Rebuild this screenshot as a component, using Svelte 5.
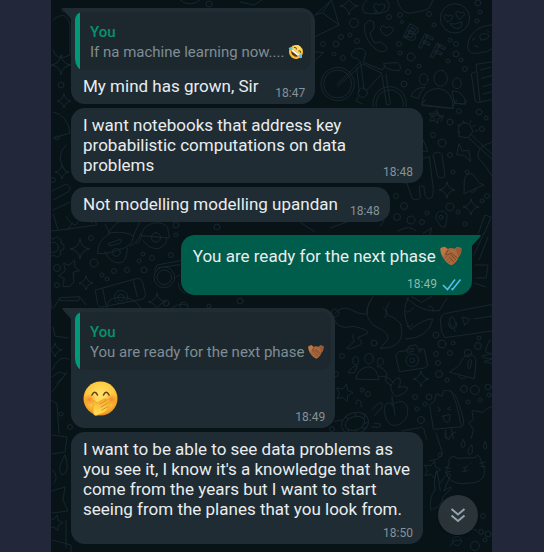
<script>
  const messages = [
    { id: 1, tail: true, quote: { text: 'If na machine learning now....', emoji: 'laugh' }, text: 'My mind has grown, Sir', time: '18:47' },
    { id: 2, text: 'I want notebooks that address key probabilistic computations on data problems', time: '18:48' },
    { id: 3, text: 'Not modelling modelling upandan', time: '18:48' },
    { id: 4, mine: true, tail: true, group: true, below: true, text: 'You are ready for the next phase', emoji: 'shake', time: '18:49' },
    { id: 5, tail: true, group: true, quote: { text: 'You are ready for the next phase', emoji: 'shake' }, big: 'giggle', time: '18:49' },
    { id: 6, below: true, text: "I want to be able to see data problems as you see it, I know it's a knowledge that have come from the years but I want to start seeing from the planes that you look from.", time: '18:50' }
  ];

  const circles = [
    [389,17,2.5],[400,15,2.5],[402,22,1.5],[354,23,4.5],[341,37,2.5],[350,35,2],[357,41,2.5],[336,44,3],[323,44,2.5],[334,54,2],[343,58,2.5],
    [399,44,2.5],[400,53,2],[411,57,4],[408,72,2.5],[419,66,2],[429,14,2.5],[434,25,2],[478,3,3],[480,12,2],[477,21,2],[450,40,2],[456,44,2.5],
    [456,54,3],[448,61,2],[461,60,2],[465,69,2.5],[404,84,3],[459,111,2.5],[479,112,3],[450,122,3],[486,118,2],[433,135,2.5],[442,143,4],[450,155,2.5],
    [482,129,2.5],[453,172,2],[487,196,2.5],[482,201,2],[450,207,4],[458,212,2],[427,213,2],[404,206,3.5],[411,220,4],[397,217,3.5],[422,222,2.5],[465,224,2],
    [396,196,2.5],[57,268,3.5],[57,285,2.5],[94,263,4],[102,275,2],[114,271,2.5],[127,270,2.5],[107,279,2],[144,270,3],[143,254,2],[139,261,2],[152,258,2.5],
    [171,255,2.5],[176,225,3],[176,235,2],[91,238,2.5],[374,343,3],[342,356,2.5],[362,390,2],[368,394,2.5],[436,335,3],[442,344,4],[453,343,2],[436,354,2.5],
    [450,353,2.5],[438,363,2.5],[439,374,3.5],[447,380,2],[478,346,3.5],[479,338,2],[415,397,2.5],[429,397,3],[417,409,2],[425,404,2],[421,420,3.5],
    [464,389,3.5],[475,390,4.5],[488,387,3],[480,400,2],[468,402,2],[489,395,2],[440,455,2],[483,516,2.5],[488,534,3],[481,532,2.5],[485,540,2],
    [457,541,4.5],[475,546,4.5],[61,85,3],[57,138,2],[53,180,2.5],[61,414,2],[70,427,2.5],[335,313,4],[336,374,2.5],[332,429,2.5],[64,10,2],[209,4,3],[217,227,3],[240,301,3],[209,306,2],[166,303,3],[376,12,1.5],[184,306,4]
  ];
  const sparkles = [[349,6,9],[447,190,8],[471,207,8],[80,249,10],[86,283,7],[157,302,9],[421,379,8],[61,65,10],[64,101,7],[62,172,7],[55,350,7]];
  const stars = [[435,117,7],[344,393,9],[55,523,8],[432,470,9]];

  const sparkle = ([x, y, r]) => `M${x} ${y - r}Q${x + 1} ${y - 1} ${x + r} ${y}Q${x + 1} ${y + 1} ${x} ${y + r}Q${x - 1} ${y + 1} ${x - r} ${y}Q${x - 1} ${y - 1} ${x} ${y - r}Z`;
  const star = ([x, y, r]) => {
    let d = '';
    for (let i = 0; i < 10; i++) {
      const a = (i * Math.PI) / 5 - 1.3;
      const q = i % 2 ? r * 0.5 : r;
      d += `${i ? 'L' : 'M'}${x + q * Math.cos(a)} ${y + q * Math.sin(a)}`;
    }
    return d + 'Z';
  };
</script>

{#snippet laugh()}
  <svg class="emoji" viewBox="0 0 32 32" role="img" aria-label="Rolling on the floor laughing">
    <g transform="rotate(38 16 16)">
      <circle cx="16" cy="16" r="14" fill="#fbbf2d" />
      <circle cx="15" cy="12" r="10" fill="#fdd75a" />
      <path d="M7 16h18c0 6-3 9-9 9s-9-3-9-9Z" fill="#5f3515" />
      <path d="M7 16h18l-1 4H8Z" fill="#fff" />
      <path d="M8 11q3-3 5 0M24 11q-3-3-5 0" fill="none" stroke="#6b3d12" stroke-width="2" stroke-linecap="round" />
      <path d="M6 13q-7 2-6 6 3 4 6-1Z" fill="#4fc5ee" />
      <path d="M26 13q7 2 6 6-3 4-6-1Z" fill="#4fc5ee" />
    </g>
  </svg>
{/snippet}

{#snippet shake()}
  <svg class="emoji" viewBox="0 0 32 27" role="img" aria-label="Handshake">
    <path d="M1 2 7 0l4 3 5-1 5 1 4-3 6 2c1 5-1 10-4 13-1 5-6 10-10 12-4-1-9-5-12-10C2 13 0 8 1 2Z" fill="#a9693d" />
    <path d="M1 2 7 0l3 3-5 11C2 10 0 6 1 2Z" fill="#bb7748" />
    <path d="m31 2-6-2-3 3 5 11c3-3 4-8 4-12Z" fill="#9a5a33" />
    <path d="m12 5-4 6q3 3 8-2l9 7M16 12l7 7M14 15l6 7" fill="none" stroke="#6d3d20" stroke-width="1.200" stroke-linecap="round" stroke-linejoin="round" />
    <path d="m7 17 3-3M10 20l3-3M13 23l3-3" fill="none" stroke="#84502e" stroke-width="1.200" stroke-linecap="round" />
  </svg>
{/snippet}

{#snippet giggle()}
  <svg class="emoji" viewBox="0 0 35 35" role="img" aria-label="Face with hand over mouth">
    <defs>
      <radialGradient id="face" cx=".5" cy=".38" r=".62">
        <stop offset="0" stop-color="#ffe36a" />
        <stop offset=".65" stop-color="#fdc93c" />
        <stop offset="1" stop-color="#ee8b1c" />
      </radialGradient>
      <radialGradient id="cheek">
        <stop offset="0" stop-color="#f47a2a" stop-opacity=".85" />
        <stop offset="1" stop-color="#f47a2a" stop-opacity="0" />
      </radialGradient>
      <linearGradient id="hand" x2="0" y2="1">
        <stop offset="0" stop-color="#f5ad2e" />
        <stop offset="1" stop-color="#ffe25c" />
      </linearGradient>
    </defs>
    <circle cx="17.5" cy="17.5" r="17" fill="url(#face)" />
    <circle cx="6.5" cy="18.5" r="6" fill="url(#cheek)" />
    <circle cx="28.5" cy="18.5" r="6" fill="url(#cheek)" />
    <path d="M9 14q2.700-5.500 5.500 0M20.500 14q2.700-5.500 5.500 0" fill="none" stroke="#653a18" stroke-width="1.600" stroke-linecap="round" />
    <path d="M10 23q-1-5 2-3l2 2 7-4q3-1 2 1l3-.5q2 1 0 2.500 2 1 0 3 1 2-1 3-1 4-6 5.500l-6 2q-3 0-3-5Z" fill="url(#hand)" stroke="#e89b25" stroke-width=".7" />
    <path d="m17 23 6-3.500M18 26l7-4M19 29l6-3.500" fill="none" stroke="#d9861d" stroke-width=".9" stroke-linecap="round" />
  </svg>
{/snippet}

{#snippet emoji(name)}
  {#if name === 'laugh'}{@render laugh()}{:else if name === 'shake'}{@render shake()}{:else}{@render giggle()}{/if}
{/snippet}

<div class="page">
  <main class="chat">
    <svg class="doodles" viewBox="51 0 441 552" preserveAspectRatio="xMinYMin slice" aria-hidden="true">
      {#each circles as [x, y, r]}<circle cx={x} cy={y} {r} />{/each}
      {#each sparkles as s}<path d={sparkle(s)} />{/each}
      {#each stars as s}<path d={star(s)} />{/each}
      <g class="fine" transform="translate(310 0) scale(.33333)">
        <path d="M15 45 65 0l22 75L15 110M15 45l22-7 28-38M37 38l50 37" />
        <path d="M170 0q-20 20-8 38 35 10 70-5 12-18-2-33M207 40q-24-18-12-28 8-3 12 4 8-9 16-2 8 12-16 26ZM262 0q8 35 35 40 40-5 60-15l12-25" />
        <circle cx="435" cy="55" r="44" />
        <path d="M413 66q-19-15-7-22 7-1 9 5 7-7 13 0 3 8-15 17ZM448 57q-17-14-7-23 7-2 10 5 8-6 12 1 2 9-15 17ZM421 72q15 3 35-7 2 22-16 20-13-1-19-13Z" />
        <path d="M190 65q-15-10-26 10c-3 32 15 65 45 79q15 5 22-8 0-10-20-20-10 0-16 3-14-16-15-30l10-10q5-10 0-24ZM229 108q-28-19-13-30 8-2 12 6 9-8 20-1 9 13-19 25Z" />
        <path d="M473 142q0-45 47-63l30-5M473 142q2 20 20 17 12 5 18-2 15 3 35-10M513 120q-10-15 5-19 15-2 19 6-2 12-24 13ZM487 120l8-5m0 22 9 4m25-51 8 7" />
        <circle cx="83" cy="252" r="50" /><circle cx="83" cy="252" r="42" />
        <path d="M190 320a50 50 0 1 1 98 0M199 320a41 41 0 1 1 80 0M82 252l70-66-12-12q-12 3-15-7c-3-24 35-30 43-10l-8 30 57 23 9-14M84 258l75-66 57 28-45 50-9-2-10-78M140 205l8 70M216 225l14 90 11-2-13-90M222 190l40-2q15 12 6 24-20 2-43-9Z" />
        <circle cx="158" cy="278" r="14" /><path d="m150 284-13 18 20 10" />
        <ellipse cx="392" cy="235" rx="20" ry="24" /><ellipse cx="341" cy="238" rx="13" ry="17" /><ellipse cx="441" cy="250" rx="13" ry="16" />
        <path d="M335 315q3-48 49-50 46 5 46 60ZM303 288q10-27 43-26-15 10-20 32ZM427 273q35-2 40 39l-32-2Z" />
        <path d="M550 185l-52 8 12 113 40-8M498 215l-14 6 12 84 14 3M512 210l30-8M515 235l30-8M518 260l30-8M520 282l30-8" />
        <g class="letters"><text transform="translate(277 109) rotate(27)">B</text><text transform="translate(322 139) rotate(27)">F</text><text transform="translate(358 167) rotate(27)">F</text></g>
        <path d="m15 155 25 3-23 22M375 360l-10-14 12 2 5-12 6 13 13-2-8 16" />
      </g>
      <g class="fine" transform="translate(380 100) scale(.33333)">
        <path d="m135 0-10 14 94 11 5-25M232 0l-7 10 28 3 6-13" />
        <path d="M237 96q-8-23 14-28 22-2 27 28l-15 17-25-3ZM273 104l67 62M265 113l75 68M340 125q-55 15-45 50 22 18 45 62" />
        <path d="M240 95l-8 3m10-20-9-3m20-4-3-9m20 8 3-8m5 18 8-5m-1 18 9-1" />
        <path d="M237 132l-7 32 23 2 19 20-6-36-18 3ZM252 280l1-40q4-22 25-18l16 20q0 8 17 12Z" /><circle cx="261" cy="216" r="6" /><path d="M272 276q13 4 17-10" />
        <path d="m183 379-14-20c-8-32 35-34 32-7l-5 28Z" /><circle cx="183" cy="352" r="6" />
        <path d="m130 120 13 34h-13M163 160q13-9 23 4l9 64q-7 10-22 2l-13-62Z" />
        <path d="m130 175 18-5 12 98q0 30-15 28-12-2-13-37-12-3-14 1l3 33q-12 11-25 2l-15-45-17-3" />
        <path d="m295 400 20-55 18 6-20 50M130 400l25-17-5 20M0 378l12-15-5-10" />
      </g>
      <g class="fine" transform="translate(330 290) scale(.33333)">
        <path d="M15 70q20-24 45-12 25 15 50 15 0-30 20-55M15 92q10 28 55 17 50 10 42 22l-30 12q18 10 10 20-35 20-42 11l23-20q-10-20 0-23M125 25c-30 50-7 80 33 95q20 15 15 28l-22 27c50 0 75-25 60-75l-20-17q-37-7-14-45" />
        <path d="M235 22q-25 45 5 97 45-35 69-32-15 60-83 60M230 25c35 30 60 40 98 37l23-38M245 20l30 17 30-17M160 55q17 9 5 28m85-30q-15 20-22 12m20 38q-5 12-18 6m80-45q-1-18-14-15" />
        <path d="m331 88 3 35 10 20 141-20M331 88q2-12 12-17l145-28M359 90q0-9 7-9 8 0 10 22-3 12-12 8ZM354 98q4 20 17 18 12-4 9-19m-7 20 2 8M397 82l7 24 15-17ZM432 87l53-9" />
        <path d="m198 195 9-10 22-3 8-13 20-5 8 13 18 1 10 49-9 7-75 11Z" /><circle cx="247" cy="211" r="19" /><circle cx="247" cy="211" r="7" /><path d="M232 178l18-3v9l-17 3Z" /><circle cx="270" cy="182" r="4" />
        <path d="m359 246 30-21c8-35 48-45 49-7l-5 47ZM385 258q9 14 21 6M415 212q5-8 10 0l-4 22q-5 4-7 0Z" /><circle cx="414" cy="189" r="11" />
        <ellipse cx="117" cy="206" rx="13" ry="16" /><ellipse cx="77" cy="212" rx="9" ry="12" /><ellipse cx="151" cy="215" rx="9" ry="11" />
        <path d="M78 266q4-32 38-36 27 5 30 38ZM55 248q8-20 27-20l-8 19ZM140 228q28 7 32 31h-24" />
        <path d="M185 285q-21-5-18-22 17 2 22 17 2-13 19-17 8 15-4 30 12-6 28-1 1 18-32 27-14-2-19-34ZM186 318l9 57M186 320v25M187 345q-20-21-24 15c6 75 68 45 70 6 1-36-28-39-46-20" />
        <ellipse cx="75" cy="400" rx="41" ry="32" transform="rotate(-18 75 400)" /><ellipse cx="75" cy="400" rx="30" ry="20" transform="rotate(-18 75 400)" />
        <path d="M78 342q2-20 14-8l2 17M125 360q35-40 32-10l-24 27M134 400q30 0 12 12l-21-1M35 390l-22 4m35-16 6 10m20-20 5 12m26-9-2 14m11 12-15 5m10 13-14-2m-10 19-9-11m-20 13-2-14" />
        <path d="m310 417-11-72 15-12 5-22 17 8 5-17c35-7 42 30 52 60l8 31q0 21-13 18ZM362 303q15 16 31 102M323 352l9 8-8 4m37-13-9 6 10 3M335 379l25-6q1 23-9 24-12-2-10-20M346 420l4 27M364 417l6 29" />
        <path d="M485 350q-17 4-26 17l-33-6 4 28-14 10 15 20-8 27M480 150q-15 25-12 37l20 4-31 6q0 8 31 10l-27 8 25 5" />
        <path d="m215 440 4-18 56-10q8 0 10 18l5 17" />
      </g>
      <g class="fine" transform="translate(50 210) scale(.33333)">
        <path d="m10 13 14 48 116-16-12-35M48 20q17 25 28 25l28-33M52 60 68 38m60-1-29-8M24 61 0 63" />
        <path d="M143 130q-2-40 40-62 50-5 68 12-5 30-46 40-40 15-62 10ZM175 70q20-35 40-35h55l-20 43M177 100l35-12q5 9-3 12l-29 8ZM240 108q25-12 33-38M275 77c0-40 60-50 78-25l5 32-83-7ZM257 100q15 1 17-23M165 125q15 34 42 34 25-2 25-45M280 92q15 25 45 24 25-9 25-30" />
        <circle cx="199" cy="127" r="12" /><circle cx="318" cy="82" r="14" />
        <path d="m0 80 10 8 10-8 14 10-2 10 10 4v13l-12 5 3 12-11 8-12-7-10 6" /><circle cx="10" cy="112" r="15" />
        <path d="m42 160 15 6 16-15 2 20 14 11-20 5 3 29-13 13-20 1 4-24-18-8 20-15Z" />
        <path d="m137 240 125-35q12 1 16 12l9 37q-4 13-12 14l-120 23q-14-2-13-12ZM158 236l10 49M250 212l12 48" /><circle cx="213" cy="261" r="20" /><circle cx="213" cy="263" r="10" />
        <path d="M170 295q0-35 43-33 42 0 60 33" />
        <circle cx="343" cy="202" r="31" /><circle cx="343" cy="202" r="22" /><path d="m314 183 7-18 70-13M325 173l65-9M375 205q10-13 15-8M385 220q0 20 20 30M365 295q20-18 45-10" />
        <path d="m10 295 20-32 60-3 17 24M30 263v9h55l5-10M0 250l5 45" />
      </g>
      <g class="fine" transform="translate(430 433) scale(.33333)">
        <path d="M45 0v12l12 8 6-15 14-8M100 20q-12 16-3 24 15-3 3-24M125 35q-18 20-7 30 15-3 7-30M165 26q10 18 2 22-12-3-2-22" />
        <path d="M70 70q-19 6-12 18l-10 28q5 32 45 36l40-3q35-7 30-40l-12-33q-5-16-16-2l-50 2ZM84 98h1m38-6h1M99 104l8 1 5-7m-8 9v7m-8 1q8 3 18-3M45 103l16 3m-15 12 16-3M165 87l-16 5m17 9-16-1" />
        <path d="M18 0 37 60q0 9-15 18L0 83M15 170q-5-38 6-58l10 60M31 150q23-40 31-24l-20 47M15 170q-20 25-12 63M42 173q25-17 22-7l-25 25q-3 30-30 38M65 290l35-10 40 12M60 340q10-22 30-18" />
      </g>
      <g>
        <path d="M53 20q13-11 17 4v31q-14 7-17-5M53 112q15 3 17 21l-17 5M66 145q-12 11 0 27M52 191l14-7q7 3 2 8l-15 8M53 210l17-8M53 327l2 9 13 2M52 370q7-16 17-11M52 377l7-5 7 2-9 9M67 372l-15 20M52 435l15 2-2 15-13 2M65 455q-9 14-3 20 9-2 3-20M53 470q6 8 1 13M51 491l14-4-2 13 5 11-16 2M66 520v28M52 540l19 5v7M51 400l6 4 2 29" />
        <path d="M180 0q10 8 20 0M240 2l14 3 8-5M105 224l5 10M300 222l15 10M330 228l20-7M398 231q12-7 18 0M484 233l-10 22M488 237l-9 23M475 265h13l-2 13h-10M474 283l12 4" />
      </g>
    </svg>

    <ol class="thread" aria-label="Messages">
      {#each messages as m (m.id)}
        <li class="bubble" class:mine={m.mine} class:tail={m.tail} class:group={m.group}>
          {#if m.tail}
            <svg class="corner" viewBox="0 0 12 14" aria-hidden="true"><path d="M12 0H1.500Q-.5 0 .6 1.500L10 12l2 2Z" /></svg>
          {/if}
          {#if m.quote}
            <blockquote class="quote">
              <strong>You</strong>
              <p>{m.quote.text} {@render emoji(m.quote.emoji)}</p>
            </blockquote>
          {/if}
          <div class="body" class:below={m.below}>
            {#if m.big}
              <p class="big">{@render emoji(m.big)}</p>
            {:else}
              <p class="text" class:roomy={m.emoji}>{m.text}{#if m.emoji}{' '}{@render emoji(m.emoji)}{/if}</p>
            {/if}
            <span class="meta">
              <time>{m.time}</time>
              {#if m.mine}
                <svg class="ticks" viewBox="0 0 20 13" role="img" aria-label="Read"><path d="m1 7 4.500 4.500L13 1.500M9.500 10.500l1 1L18.500 1.500" /></svg>
              {/if}
            </span>
          </div>
        </li>
      {/each}
    </ol>

    <button class="jump" type="button" aria-label="Scroll to latest message">
      <svg viewBox="0 0 16 16" aria-hidden="true"><path d="m1.500 2 6.500 5.500L14.500 2M1.500 8.500 8 14l6.500-5.500" /></svg>
    </button>
  </main>
</div>

<style>
  :global(body) {
    background: #222839;
  }

  .page {
    min-height: 100vh;
    padding: 0 52px 0 51px;
    display: grid;
    font-family: Roboto, sans-serif;
    box-sizing: border-box;
  }

  .chat {
    position: relative;
    overflow: hidden;
    padding: 8px 20px 7px;
    background: #081318;
    color: #e9edef;
  }

  .doodles {
    position: absolute;
    inset: 0;
    width: 100%;
    height: 100%;
    fill: none;
    stroke: #17262e;
    stroke-width: 1;
    stroke-linecap: round;
    stroke-linejoin: round;
  }

  .fine {
    stroke-width: 3;
  }

  .letters {
    font: 700 62px Roboto, sans-serif;
  }

  .thread {
    position: relative;
    display: flex;
    flex-direction: column;
    align-items: flex-start;
    gap: 4px;
    margin: 0;
    padding: 0;
    list-style: none;
  }

  .bubble {
    position: relative;
    box-sizing: border-box;
    max-width: 352px;
    border-radius: 14px;
    background: #202c33;
    color: #202c33;
  }

  .bubble.group {
    margin-top: 9px;
  }

  .bubble.mine {
    align-self: flex-end;
    background: #005c4b;
    color: #005c4b;
  }

  .corner {
    position: absolute;
    top: 0;
    left: -9px;
    width: 12px;
    height: 14px;
    fill: currentColor;
  }

  .mine .corner {
    left: auto;
    right: -9px;
    transform: scaleX(-1);
  }

  .tail:not(.mine) {
    border-top-left-radius: 0;
  }

  .tail.mine {
    border-top-right-radius: 0;
  }

  p {
    margin: 0;
  }

  .quote {
    position: relative;
    margin: 0;
    border: 4px solid transparent;
    border-bottom: 0;
    padding: 10px 7px 8px 15px;
    border-radius: 12px;
    background: linear-gradient(90deg, #009a78 5px, #1d282e 5px) padding-box;
    color: #7f8d95;
    font-size: 15px;
    line-height: 20px;
  }

  .quote strong {
    display: block;
    color: #05926f;
    font-weight: 500;
  }

  .quote p {
    height: 20px;
  }

  .quote .emoji {
    width: 16px;
    height: 16px;
    vertical-align: -3px;
  }

  .body {
    display: flex;
    justify-content: space-between;
    align-items: flex-end;
    gap: 12px;
    padding: 0 10px 3px 12px;
  }

  .body.below {
    flex-direction: column;
    gap: 0;
  }

  .text {
    padding: 7px 0 5px;
    color: #e9edef;
    font-size: 17px;
    line-height: 20px;
  }

  .quote + .body .text {
    padding-top: 6px;
  }

  .below .text {
    align-self: flex-start;
    margin-right: -4px;
    padding: 7px 0 6px;
  }

  .below .text.roomy {
    margin-right: 0;
    padding: 11px 0 10px;
  }

  .text .emoji {
    width: 22px;
    height: 20px;
    vertical-align: -4px;
  }

  .big {
    padding: 11px 0 9px;
  }

  .big .emoji {
    display: block;
    width: 35px;
    height: 35px;
  }

  .meta {
    display: flex;
    align-items: center;
    gap: 5px;
    color: #84929a;
    font-size: 12px;
    line-height: 16px;
  }

  .mine .meta {
    color: #8bb9ad;
  }

  .ticks {
    width: 20px;
    height: 13px;
    fill: none;
    stroke: #53bdeb;
    stroke-width: 1.600;
  }

  .jump {
    position: absolute;
    right: 14px;
    bottom: 17px;
    display: grid;
    place-items: center;
    width: 40px;
    height: 40px;
    padding: 0;
    border: 0;
    border-radius: 50%;
    background: #2a3338;
    box-shadow: 0 1px 2px #0006;
  }

  .jump svg {
    width: 16px;
    height: 16px;
    fill: none;
    stroke: #93a4ae;
    stroke-width: 2;
  }
</style>
